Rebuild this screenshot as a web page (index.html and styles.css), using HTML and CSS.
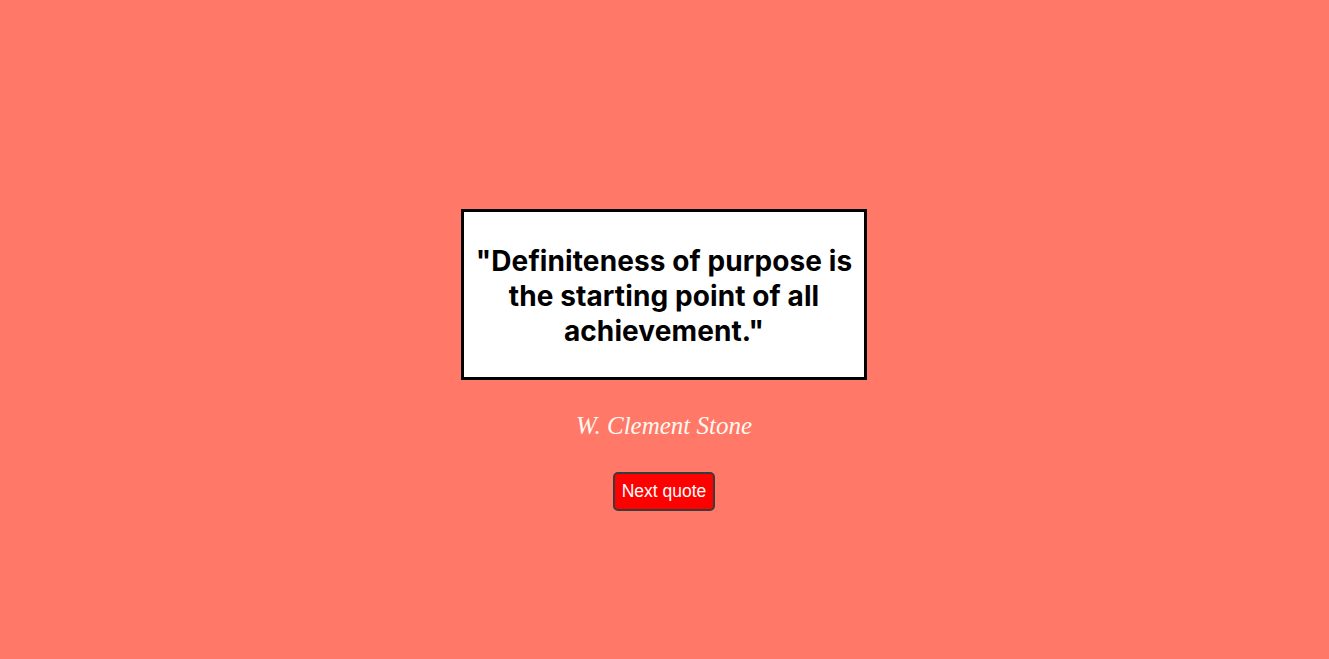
FILE: index.html
```html
<!DOCTYPE html>
<html>
<head>
<meta charset="utf-8">
<link rel="stylesheet" href="styles.css">
</head>
<body>
<main class="page">
  <div class="quote-box">
    <p class="quote">"Definiteness of purpose is the starting point of all achievement."</p>
  </div>
  <p class="author">W. Clement Stone</p>
  <button class="next">Next quote</button>
</main>
</body>
</html>
```
FILE: styles.css
```css
html, body {
  margin: 0;
  padding: 0;
}
body {
  background: #ff7868;
  font-family: "Liberation Sans", Arial, sans-serif;
}
.page {
  height: 659px;
  box-sizing: border-box;
  display: flex;
  flex-direction: column;
  align-items: center;
  padding-top: 209px;
  padding-right: 1px;
}
.quote-box {
  width: 400px;
  box-sizing: content-box;
  background: #fff;
  border: 3px solid #000;
  padding: 32px 0 28px;
}
.quote {
  margin: 0;
  padding: 0 8px;
  text-align: center;
  font-family: Inter, "Noto Sans", sans-serif;
  font-weight: 700;
  font-size: 28px;
  letter-spacing: 0.1px;
  line-height: 35px;
  color: #000;
}
.author {
  margin: 30px 0 0;
  font-family: "Liberation Serif", "DejaVu Serif", serif;
  font-style: italic;
  font-size: 25px;
  line-height: 32px;
  color: #fff8f0;
}
.next {
  margin-top: 30px;
  background: #ff0000;
  color: #fff;
  border: 2px solid #3a3a3a;
  border-radius: 5px;
  font-family: "Liberation Sans", Arial, sans-serif;
  font-size: 17.5px;
  width: 102px;
  height: 39px;
  padding: 0;
}
```
